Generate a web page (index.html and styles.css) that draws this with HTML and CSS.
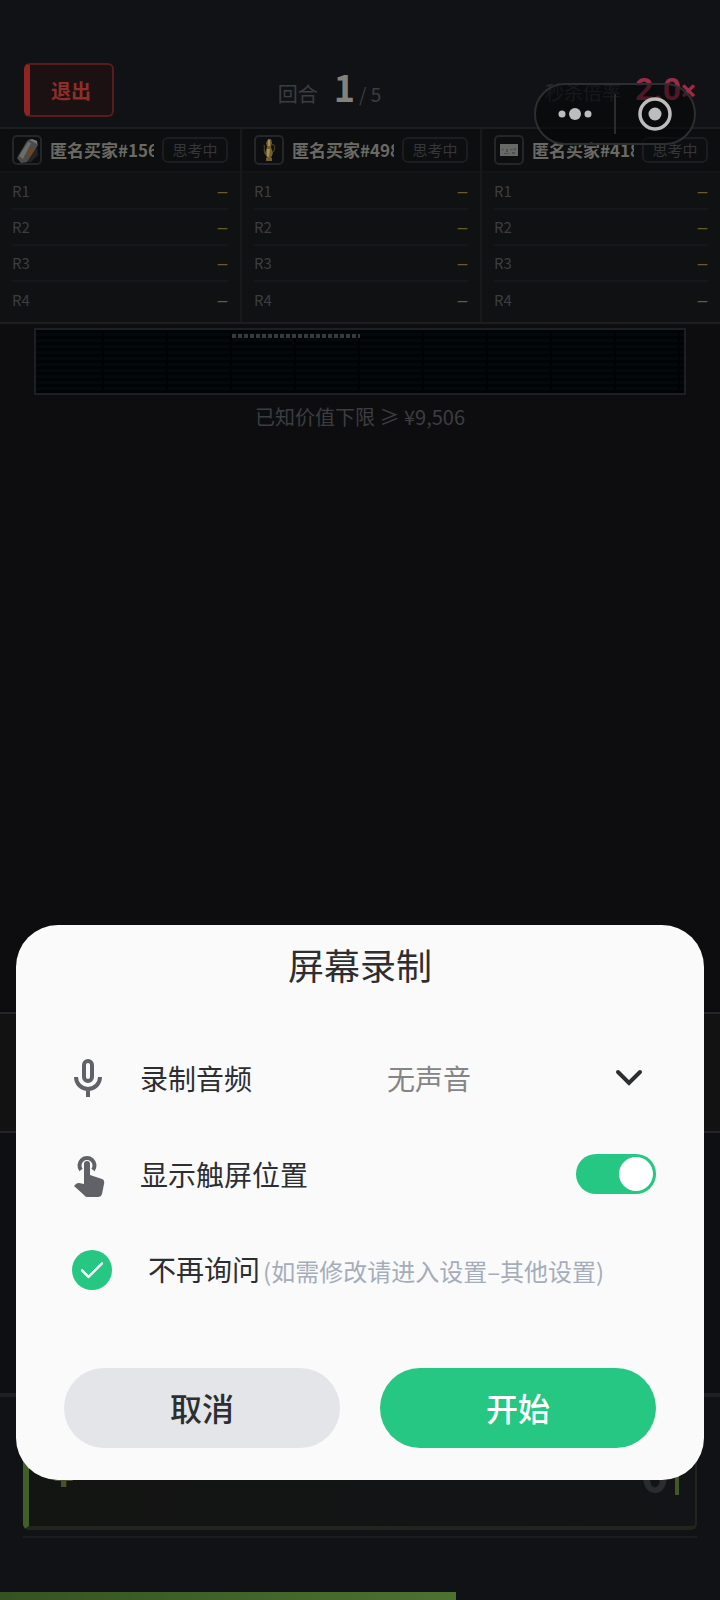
FILE: index.html
```html
<!DOCTYPE html>
<html lang="zh-CN">
<head>
    <meta charset="UTF-8">
    <meta name="viewport" content="width=device-width, initial-scale=1.0">
    <title>屏幕录制</title>
    <link rel="stylesheet" href="styles.css">
</head>
<body>
    <div class="game">
        <header class="top-bar">
            <button type="button" class="exit-btn">退出</button>
            <div class="round">
                <span>回合</span>
                <strong>1</strong>
                <span class="round-total">/ 5</span>
            </div>
            <div class="rate">
                <span>秒杀倍率</span>
                <strong>2.0<small>×</small></strong>
            </div>
        </header>

        <div class="capsule">
            <button type="button" aria-label="更多">
                <svg width="36" height="36" viewBox="0 0 36 36" fill="currentColor">
                    <circle cx="5" cy="18" r="3.5"/>
                    <circle cx="18" cy="18" r="6"/>
                    <circle cx="31" cy="18" r="3.5"/>
                </svg>
            </button>
            <button type="button" aria-label="关闭">
                <svg width="36" height="36" viewBox="0 0 36 36">
                    <circle cx="18" cy="18" r="15" fill="none" stroke="currentColor" stroke-width="3.5"/>
                    <circle cx="18" cy="18" r="6.5" fill="currentColor"/>
                </svg>
            </button>
        </div>

        <section class="buyers">
            <article class="buyer">
                <div class="buyer-head">
                    <span class="avatar">
                        <svg width="26" height="26" viewBox="0 0 26 26">
                            <path d="M3 21 13 4l3-2 7 2 1 4-10 17-7 1z" fill="#4c4c4b"/>
                            <path d="M5 19 14 5l3 1-8 16z" fill="#6c6c6a"/>
                            <path d="m13 17 4-7 4 2-5 9z" fill="#6b4527"/>
                            <path d="m16 3 2-1 5 2v3z" fill="#777"/>
                            <path d="m13 25 10-15 1 8-7 7z" fill="#252423"/>
                        </svg>
                    </span>
                    <span class="name">匿名买家#156</span>
                    <span class="status">思考中</span>
                </div>
                <dl class="bids">
                    <div><dt>R1</dt><dd>—</dd></div>
                    <div><dt>R2</dt><dd>—</dd></div>
                    <div><dt>R3</dt><dd>—</dd></div>
                    <div><dt>R4</dt><dd>—</dd></div>
                </dl>
            </article>
            <article class="buyer">
                <div class="buyer-head">
                    <span class="avatar">
                        <svg width="26" height="26" viewBox="0 0 26 26">
                            <path d="M12 2h3l1 4-1 4 2 6-2 5h1v3h-6v-3h1l-2-5 2-6-1-4z" fill="#735d2b"/>
                            <path d="M12 3h2v6h-2zm-1 9h3l-1 8-2-1z" fill="#a08f60"/>
                            <path d="M10 18C7 15 9 11 8 8M16 8c4-2 3 5 1 7" fill="none" stroke="#5e4d24" stroke-width="1"/>
                        </svg>
                    </span>
                    <span class="name">匿名买家#498</span>
                    <span class="status">思考中</span>
                </div>
                <dl class="bids">
                    <div><dt>R1</dt><dd>—</dd></div>
                    <div><dt>R2</dt><dd>—</dd></div>
                    <div><dt>R3</dt><dd>—</dd></div>
                    <div><dt>R4</dt><dd>—</dd></div>
                </dl>
            </article>
            <article class="buyer">
                <div class="buyer-head">
                    <span class="avatar">
                        <svg width="26" height="26" viewBox="0 0 26 26">
                            <path d="M4 7h18v12H4z" fill="#686966"/>
                            <path d="M6 12h2v1H6zm4 0h2v3h-2zm4 0h3v1h-3zm4-1h2v2h-2zM8 16h5v1H8zm8-1h3v2h-3z" fill="#4e504d"/>
                        </svg>
                    </span>
                    <span class="name">匿名买家#418</span>
                    <span class="status">思考中</span>
                </div>
                <dl class="bids">
                    <div><dt>R1</dt><dd>—</dd></div>
                    <div><dt>R2</dt><dd>—</dd></div>
                    <div><dt>R3</dt><dd>—</dd></div>
                    <div><dt>R4</dt><dd>—</dd></div>
                </dl>
            </article>
        </section>

        <main class="stage">
            <div class="vault">
                <div class="vault-mark"></div>
            </div>
            <p class="floor-price">已知价值下限 ≥ ¥9,506</p>
        </main>

        <div class="shelf"></div>
        <div class="tools"></div>
        <footer class="bid-bar">
            <div class="bid-box">
                <span class="currency">¥</span>
                <span class="amount">0</span>
                <span class="caret"></span>
            </div>
            <div class="timer"><div class="timer-fill" style="width: 63.3%"></div></div>
        </footer>
    </div>

    <form class="dialog" role="dialog" aria-labelledby="dialogTitle">
        <h1 id="dialogTitle">屏幕录制</h1>
        <div class="option">
            <svg class="icon" width="48" height="48" viewBox="0 0 48 48" fill="none" stroke="#616267">
                <rect x="20" y="7" width="8" height="20" rx="4" stroke-width="4"/>
                <path d="M12 23a12 12 0 0 0 24 0M24 35v8" stroke-width="4"/>
            </svg>
            <label for="audio">录制音频</label>
            <div class="select-wrap">
                <select id="audio">
                    <option>无声音</option>
                    <option>麦克风</option>
                </select>
                <svg class="chevron" width="30" height="20" viewBox="0 0 30 20" fill="none" stroke="#2d2e31" stroke-width="4" stroke-linecap="round">
                    <path d="m4 4 11 11L26 4"/>
                </svg>
            </div>
        </div>
        <div class="option">
            <svg class="icon" width="48" height="48" viewBox="0 0 48 48">
                <path d="M17 20a7.500 7.500 0 1 1 12 0" fill="none" stroke="#616267" stroke-width="4"/>
                <path d="M20 14a3 3 0 0 1 6 0v11l12 4q3 1 2 5l-2 10q-1 3-4 3H23q-2 0-3-2l-10-9 2-2q1-1 3-1l5 1z" fill="#616267"/>
            </svg>
            <label for="touch">显示触屏位置</label>
            <input type="checkbox" id="touch" class="switch" checked>
        </div>
        <div class="option">
            <input type="checkbox" id="never" class="check" checked>
            <label for="never" class="never">不再询问<span class="hint">(如需修改请进入设置–其他设置)</span></label>
        </div>
        <div class="actions">
            <button type="button" class="cancel">取消</button>
            <button type="button" class="start">开始</button>
        </div>
    </form>
</body>
</html>
```
FILE: styles.css
```css
* {
    box-sizing: border-box;
}

body {
    margin: 0;
    background: #0d0d0f;
    font-family: 'Noto Sans CJK SC', sans-serif;
    color: #3c3d40;
    position: relative;
}

button {
    font-family: inherit;
    border: none;
    padding: 0;
    cursor: pointer;
}

.game {
    min-height: 100vh;
    display: flex;
    flex-direction: column;
}

/* top bar */
.top-bar {
    height: 129px;
    padding: 53px 24px 0;
    display: flex;
    justify-content: space-between;
    align-items: center;
    background: #111215;
    border-bottom: 2px solid #1c1d1f;
}

.exit-btn {
    width: 90px;
    height: 54px;
    border: 2px solid #571d1e;
    border-left: 6px solid #8f2522;
    border-radius: 6px;
    background: #1b1113;
    color: #8f2d29;
    font-size: 20px;
    font-weight: 700;
}

.round {
    display: flex;
    align-items: baseline;
    font-size: 20px;
    line-height: 40px;
}

.round strong {
    margin: 0 4px 0 16px;
    font-size: 36px;
    color: #85827c;
}

.round-total {
    font-size: 19px;
}

.rate {
    display: flex;
    align-items: baseline;
    gap: 14px;
    font-size: 19px;
    line-height: 32px;
    color: #2c2d30;
}

.rate strong {
    font-family: Roboto, sans-serif;
    font-size: 32px;
    color: #9c2b49;
}

.rate small {
    font-size: 28px;
}

.capsule {
    position: absolute;
    top: 83px;
    right: 24px;
    width: 162px;
    height: 62px;
    display: flex;
    align-items: center;
    border: 2px solid #2d2e30;
    border-radius: 31px;
    background: rgba(3, 4, 6, 0.5);
}

.capsule button {
    flex: 1;
    height: 40px;
    display: flex;
    justify-content: center;
    align-items: center;
    background: none;
    color: #bdbdbe;
}

.capsule button + button {
    border-left: 2px solid #2b2c2e;
}

/* buyers */
.buyers {
    display: grid;
    grid-template-columns: repeat(3, 1fr);
    background: #0f1113;
    border-bottom: 2px solid #1d1e20;
}

.buyer {
    min-width: 0;
}

.buyer + .buyer {
    border-left: 2px solid #17191b;
}

.buyer-head {
    height: 44px;
    padding: 0 12px;
    display: flex;
    align-items: center;
    gap: 8px;
    background: #0c0e10;
    border-bottom: 2px solid #131517;
}

.avatar {
    flex: none;
    width: 30px;
    height: 30px;
    border: 2px solid #242628;
    border-radius: 5px;
    overflow: hidden;
}

.avatar svg {
    display: block;
}

.name {
    flex: 1;
    min-width: 0;
    overflow: hidden;
    white-space: nowrap;
    font-size: 17px;
    line-height: 28px;
    font-weight: 700;
    color: #6b6963;
}

.status {
    flex: none;
    width: 66px;
    border: 2px solid #1b1d20;
    border-radius: 6px;
    font-size: 15px;
    line-height: 22px;
    text-align: center;
    color: #36373a;
}

.bids {
    margin: 0;
    padding: 1px 12px 4px;
}

.bids div {
    height: 36px;
    display: flex;
    justify-content: space-between;
    align-items: center;
    font-size: 15px;
    line-height: 24px;
    border-bottom: 2px solid #15171a;
}

.bids div:last-child {
    border-bottom: none;
}

.bids dd {
    margin: 0;
    font-size: 12px;
    font-weight: 700;
    color: #6b5930;
}

/* vault */
.stage {
    flex: 1;
    padding: 4px 34px 0;
}

.vault {
    height: 67px;
    border: 2px solid #1d1f22;
    padding: 4px;
    background:
        repeating-linear-gradient(90deg, transparent 0 62px, #010204 62px 64px) 4px 0,
        repeating-linear-gradient(#010406 0 3px, #04080b 3px 6px);
}

.vault-mark {
    width: 20%;
    height: 4px;
    margin-left: 30%;
    background: repeating-linear-gradient(90deg, #38393b 0 4px, transparent 4px 6px);
}

.floor-price {
    margin: 8px 0 0;
    font-size: 20px;
    line-height: 28px;
    text-align: center;
}

/* lower panels */
.shelf {
    height: 119px;
    background: #121212;
    border-top: 2px solid #252527;
}

.tools {
    height: 262px;
    background: #0e0f12;
    border-top: 2px solid #232426;
}

.bid-bar {
    background: #111215;
    border-top: 4px solid #1f2023;
}

.bid-box {
    height: 120px;
    margin: 13px 23px 6px;
    padding: 4px 16px 0 24px;
    display: flex;
    align-items: center;
    background: linear-gradient(90deg, #131513, #131417);
    border: 2px solid #22251e;
    border-bottom-width: 4px;
    border-left: 6px solid #416029;
    border-radius: 6px;
}

.currency {
    font-size: 36px;
    font-weight: 700;
    line-height: 48px;
    color: #485033;
}

.amount {
    margin-left: auto;
    font-size: 48px;
    font-weight: 700;
    line-height: 56px;
    color: #2b2c2e;
}

.caret {
    width: 4px;
    height: 48px;
    margin-left: 6px;
    background: #415629;
}

.timer {
    margin-top: 6px;
    padding-top: 56px;
    position: relative;
}

.timer::before {
    content: '';
    position: absolute;
    top: 0;
    left: 23px;
    right: 23px;
    height: 2px;
    background: #1b1d20;
}

.timer-fill {
    height: 8px;
    background: linear-gradient(90deg, #355322, #4c7131);
}

/* dialog */
.dialog {
    position: fixed;
    left: 16px;
    right: 16px;
    bottom: 120px;
    padding: 0 48px 32px;
    border-radius: 42px;
    background: #fafafa;
    color: #2d2e31;
}

.dialog h1 {
    margin: 0 0 26px;
    font-size: 36px;
    line-height: 79px;
    font-weight: 400;
    text-align: center;
}

.option {
    height: 96px;
    display: flex;
    align-items: center;
    font-size: 28px;
    line-height: 40px;
}

.icon {
    flex: none;
    margin-right: 28px;
}

.select-wrap {
    position: relative;
    width: 269px;
    margin-left: auto;
}

.select-wrap select {
    width: 100%;
    height: 48px;
    padding: 0;
    border: none;
    appearance: none;
    background: none;
    font-family: inherit;
    font-size: 28px;
    color: #858585;
}

.chevron {
    position: absolute;
    top: 14px;
    right: 12px;
    pointer-events: none;
}

.switch {
    appearance: none;
    width: 80px;
    height: 40px;
    margin: 0 0 0 auto;
    padding: 3px;
    border-radius: 20px;
    background: #c9cbd0;
}

.switch::before {
    content: '';
    display: block;
    width: 34px;
    height: 34px;
    border-radius: 50%;
    background: #fff;
}

.switch:checked {
    background: #25c782;
}

.switch:checked::before {
    margin-left: auto;
}

.check {
    appearance: none;
    flex: none;
    width: 40px;
    height: 40px;
    margin: 0 36px 0 8px;
    display: grid;
    place-items: center;
    border: 2px solid #c9cbd0;
    border-radius: 50%;
}

.check:checked {
    border: none;
    background: #25c782;
}

.check:checked::before {
    content: '';
    width: 19px;
    height: 9px;
    margin-bottom: 6px;
    border: solid #fafafa;
    border-width: 0 0 3px 3px;
    border-radius: 2px;
    transform: rotate(-45deg);
}

.never {
    white-space: nowrap;
}

.hint {
    margin-left: 3px;
    font-size: 24px;
    color: #a6adba;
}

.actions {
    margin-top: 50px;
    display: flex;
    gap: 40px;
}

.actions button {
    flex: 1;
    height: 80px;
    padding-bottom: 2px;
    border-radius: 40px;
    font-size: 32px;
    font-weight: 500;
}

.cancel {
    background: #e4e5e9;
    color: #2d2e31;
}

.start {
    background: #25c782;
    color: #fff;
}
```
